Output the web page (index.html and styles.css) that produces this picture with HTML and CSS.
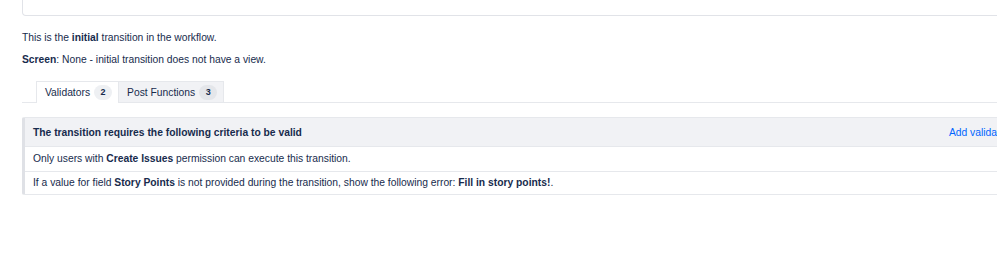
FILE: index.html
```html
<!DOCTYPE html>
<html lang="en">

<head>
    <meta charset="UTF-8">
    <title>Transition</title>
    <link rel="stylesheet" href="styles.css">
</head>

<body>
    <div class="page">
        <div class="top-box"></div>

        <p class="intro">This is the <b>initial</b> transition in the workflow.</p>
        <p class="screen"><b>Screen</b>: None - initial transition does not have a view.</p>

        <div class="tabs">
            <div class="tab active">Validators <span class="badge">2</span></div>
            <div class="tab">Post Functions <span class="badge">3</span></div>
        </div>

        <div class="criteria">
            <div class="criteria-head">
                <span>The transition requires the following criteria to be valid</span>
                <a href="#">Add validator</a>
            </div>
            <div class="criteria-row">Only users with <b>Create Issues</b> permission can execute this transition.</div>
            <div class="criteria-row">If a value for field <b>Story Points</b> is not provided during the transition, show the following error: <b>Fill in story points!</b>.</div>
        </div>
    </div>
</body>

</html>
```

FILE: styles.css
```css
* {
    margin: 0;
    padding: 0;
    box-sizing: border-box;
}

body {
    background-color: white;
    overflow: hidden;
    font-family: "Liberation Sans", Arial, sans-serif;
    font-size: 10.3px;
    color: #172b4d;
}

.page {
    width: 1000px;
    margin-left: 22px;
}

.top-box {
    height: 16px;
    border: 1px solid #e1e3e8;
    border-top: none;
    border-radius: 0 0 4px 4px;
}

.intro {
    margin-top: 15px;
    line-height: 13px;
}

.screen {
    margin-top: 9px;
    line-height: 13px;
}

.tabs {
    display: flex;
    margin-top: 15px;
    padding-left: 14px;
    border-bottom: 1px solid #e6e8ec;
}

.tab {
    height: 21px;
    display: flex;
    align-items: center;
    gap: 4px;
    padding: 0 6px 0 8px;
    border: 1px solid #e6e8ec;
    border-bottom: none;
    background-color: #f1f2f5;
}

.tab.active {
    background-color: white;
    border-right: none;
    margin-bottom: -1px;
    height: 22px;
}

.badge {
    display: inline-block;
    width: 18px;
    height: 15px;
    line-height: 15px;
    border-radius: 8px;
    background-color: #e4e6ea;
    font-size: 9px;
    font-weight: bold;
    text-align: center;
}

.tab.active .badge {
    background-color: #eef0f3;
}

.criteria {
    margin-top: 14px;
    border: 1px solid #e6e8ec;
    border-left: 3px solid #dfe1e6;
    border-radius: 2px;
}

.criteria-head {
    display: flex;
    justify-content: space-between;
    align-items: center;
    height: 29px;
    padding: 0 12px 0 8px;
    background-color: #f1f2f5;
    font-weight: bold;
    border-bottom: 1px solid #e6e8ec;
}

.criteria-head a {
    color: #0065ff;
    font-weight: normal;
    text-decoration: none;
}

.criteria-row {
    height: 25px;
    line-height: 24px;
    padding-left: 8px;
    border-bottom: 1px solid #e6e8ec;
}

.criteria-row:last-child {
    height: 22px;
    line-height: 21px;
    border-bottom: none;
}
```
